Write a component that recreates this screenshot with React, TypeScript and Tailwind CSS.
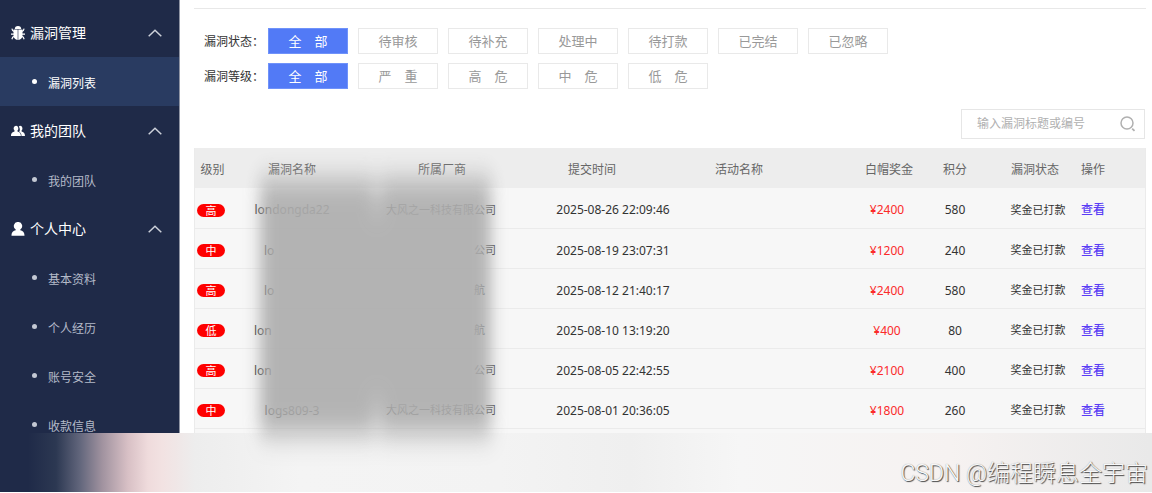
import React from "react";

type MenuGroup = { title: string; icon: React.ReactNode; items: string[] };

const BugIcon = () => (
  <svg viewBox="0 0 14 14" className="size-[14px]" aria-hidden="true">
    <path d="M3.800 3a3.200 3 0 0 1 6.400 0z" fill="#fff" />
    <path d="M2.500 3.600h4.200v10.400C4.200 13.800 2.500 12 2.500 9.500zM7.300 3.600h4.200v5.900c0 2.500-1.700 4.300-4.200 4.500z" fill="#fff" />
    <path d="M.9 2.600l.8 2 1.600.9M0 8.200h3M.9 13.300l.8-2.200 1.700-.8M13.100 2.600l-.8 2-1.600.9M14 8.200h-3M13.100 13.300l-.8-2.200-1.700-.8" stroke="#fff" strokeWidth="1.200" fill="none" />
  </svg>
);

const TeamIcon = () => (
  <svg viewBox="0 0 14 14" className="size-[14px]" aria-hidden="true">
    <path d="M9.300 1.800a2.400 2.600 0 0 1 1.300 4.600v1c1.500.5 3.400 1.300 3.400 4.500h-3.500c-.1-2.600-1-3.400-2.300-4 .9-1.500.9-4.100-.4-5.200.4-.6 1-.9 1.500-.9z" fill="#fff" />
    <path d="M5.200 1.800a2.400 2.600 0 0 1 1.300 4.600v1c1.600.5 3.400 1.300 3.400 4.500H0c0-3.200 1.900-4 3.500-4.500v-1a2.500 2.600 0 0 1 1.700-4.600z" fill="#fff" />
  </svg>
);

const UserIcon = () => (
  <svg viewBox="0 0 14 14" className="size-[14px]" aria-hidden="true">
    <path d="M7 0a3.900 4 0 0 1 2.300 7.400v.8c2.200.5 4.200 1.600 4.200 5.500H.5c0-3.900 2-5 4.200-5.500v-.8A3.900 4 0 0 1 7 0z" fill="#fff" />
  </svg>
);

const Chevron = () => (
  <svg viewBox="0 0 14 8" className="h-[8px] w-[14px]" aria-hidden="true">
    <path d="M.7 7.200L7 1.200l6.300 6" stroke="#cdd1da" strokeWidth="1.500" fill="none" />
  </svg>
);

const menu: MenuGroup[] = [
  { title: "漏洞管理", icon: <BugIcon />, items: ["漏洞列表"] },
  { title: "我的团队", icon: <TeamIcon />, items: ["我的团队"] },
  { title: "个人中心", icon: <UserIcon />, items: ["基本资料", "个人经历", "账号安全", "收款信息"] },
];

const filters = [
  { label: "漏洞状态：", options: ["全　部", "待审核", "待补充", "处理中", "待打款", "已完结", "已忽略"] },
  { label: "漏洞等级：", options: ["全　部", "严　重", "高　危", "中　危", "低　危"] },
];

const rows = [
  { level: "高", name: "londongda22", vendor: "大风之一科技有限公司", time: "2025-08-26 22:09:46", bounty: "¥2400", points: 580 },
  { level: "中", name: "lo", vendor: "公司", time: "2025-08-19 23:07:31", bounty: "¥1200", points: 240 },
  { level: "高", name: "lo", vendor: "航", time: "2025-08-12 21:40:17", bounty: "¥2400", points: 580 },
  { level: "低", name: "lon", vendor: "航", time: "2025-08-10 13:19:20", bounty: "¥400", points: 80 },
  { level: "高", name: "lon", vendor: "公司", time: "2025-08-05 22:42:55", bounty: "¥2100", points: 400 },
  { level: "中", name: "logs809-3", vendor: "大风之一科技有限公司", time: "2025-08-01 20:36:05", bounty: "¥1800", points: 260 },
];

function Sidebar() {
  return (
    <nav className="w-[180px] shrink-0 border-r border-[#8f94a3] bg-[#1f2a48] pt-2">
      {menu.map((group, g) => (
        <section key={group.title}>
          <button type="button" className="flex h-[49px] w-full items-center gap-[5px] pr-[17px] pl-[11px] text-[14px] text-white">
            {group.icon}
            <span>{group.title}</span>
            <span className="ml-auto"><Chevron /></span>
          </button>
          <ul>
            {group.items.map((item) => (
              <li key={item}>
                <a
                  href="#"
                  className={`flex h-[49px] items-center gap-[11px] pl-8 text-[12px] ${g === 0 ? "bg-[#293b61] text-white" : "text-[#b4bac8]"}`}
                >
                  <span className={`size-[5px] rounded-full ${g === 0 ? "bg-white" : "bg-[#c3c8d3]"}`} />
                  <span className="pt-1">{item}</span>
                </a>
              </li>
            ))}
          </ul>
        </section>
      ))}
    </nav>
  );
}

function Filters() {
  return (
    <div className="flex flex-col gap-[9px] pt-[19px] pl-[10px]">
      {filters.map((f) => (
        <div key={f.label} className="flex items-center" role="group" aria-label={f.label}>
          <span className="w-16 shrink-0 pt-[2px] text-[12px] whitespace-nowrap text-[#333]">{f.label}</span>
          <div className="flex gap-[10px]">
            {f.options.map((o, i) => (
              <button
                key={o}
                type="button"
                className={`h-[26px] w-20 border text-[13px] leading-none ${i === 0 ? "border-[#6f92fa] bg-[#527af6] text-white" : "border-[#e9e9e9] bg-white text-[#999]"}`}
              >
                {o}
              </button>
            ))}
          </div>
        </div>
      ))}
    </div>
  );
}

function SearchBox() {
  return (
    <form className="mt-5 mr-px ml-auto flex h-[30px] w-[184px] items-center border border-[#e6e6e6] pr-2 pl-[15px]" role="search">
      <input
        type="search"
        aria-label="搜索漏洞"
        placeholder="输入漏洞标题或编号"
        className="min-w-0 flex-1 bg-transparent text-[12px] text-[#333] outline-none placeholder:text-[#b0b0b0]"
      />
      <button type="button" aria-label="搜索">
        <svg viewBox="0 0 16 16" className="size-4" aria-hidden="true">
          <circle cx="7" cy="7" r="6" stroke="#b0b0b0" strokeWidth="1.500" fill="none" />
          <path d="M12.200 12.600l2.300 2.200" stroke="#b0b0b0" strokeWidth="1.800" />
        </svg>
      </button>
    </form>
  );
}

function Redaction() {
  return (
    <svg className="pointer-events-none absolute top-[-40px] left-0 z-10 h-[400px] w-[400px]" viewBox="0 0 400 400" aria-hidden="true">
      <defs>
        <filter id="soft" x="-50%" y="-50%" width="200%" height="200%">
          <feGaussianBlur stdDeviation="8 14" />
        </filter>
      </defs>
      <g filter="url(#soft)" fill="#aeaeae" opacity="0.93">
        <rect x="65" y="71" width="115" height="256" />
        <rect x="184" y="71" width="112" height="256" />
        <rect x="179" y="100" width="6" height="196" />
      </g>
    </svg>
  );
}

function BugTable() {
  return (
    <div className="relative mt-[9px] flex-1 border-x border-[#ebebeb] bg-[#f7f7f7]">
      <table className="w-full table-fixed border-collapse text-center text-[12px] whitespace-nowrap">
        <colgroup>
          <col className="w-[35px]" />
          <col className="w-[124px]" />
          <col className="w-[176px]" />
          <col className="w-[166px]" />
          <col />
          <col className="w-[64px]" />
          <col className="w-[68px]" />
          <col className="w-[92px]" />
          <col className="w-[64px]" />
        </colgroup>
        <thead>
          <tr className="h-[40px] bg-[#ededed] text-[#666] [&>th]:pt-[3px] [&>th]:font-normal">
            <th>级别</th>
            <th>漏洞名称</th>
            <th>所属厂商</th>
            <th className="pr-[42px]">提交时间</th>
            <th className="pl-[19px] text-left">活动名称</th>
            <th>白帽奖金</th>
            <th>积分</th>
            <th>漏洞状态</th>
            <th className="text-left">操作</th>
          </tr>
        </thead>
        <tbody>
          {rows.map((r) => (
            <tr key={r.time} className="h-[40px] border-b border-[#ebebeb] text-[#333] [&>td]:pt-[5px]">
              <td className="pl-[2px] text-left">
                <span className="flex h-[13px] w-7 items-center justify-center rounded-full bg-[#fe0000] text-[11px] leading-none text-white">{r.level}</span>
              </td>
              <td className={r.name.length > 4 ? "" : r.name === "lo" ? "pl-[34px] text-left" : "pl-[24px] text-left"}>{r.name}</td>
              <td className={`text-right text-[11px] ${r.vendor === "航" ? "pr-[45px]" : "pr-[34px]"}`}>{r.vendor}</td>
              <td>{r.time}</td>
              <td></td>
              <td className="pr-[4px] text-[#fb2a2a]">{r.bounty}</td>
              <td>{r.points}</td>
              <td className="pl-[6px] text-[11px]">奖金已打款</td>
              <td className="text-left">
                <a href="#" className="font-medium text-[#5a3cf5]">查看</a>
              </td>
            </tr>
          ))}
        </tbody>
      </table>
      <Redaction />
    </div>
  );
}

export default function App() {
  return (
    <div className="bg-white font-['Noto_Sans','Noto_Sans_CJK_SC',sans-serif]">
      <div className="flex">
        <Sidebar />
        <main className="flex min-w-0 flex-1 flex-col pt-2 pr-[6px] pl-[14px]">
          <hr className="border-[#e8e8e8]" />
          <Filters />
          <SearchBox />
          <BugTable />
        </main>
      </div>
      <footer className="relative -mt-4 flex h-[59px] items-end justify-end bg-[linear-gradient(90deg,#1f2a48_0,#1f2a48_28px,#2c3852_56px,#62667c_80px,#a0929f_102px,#d8c0c5_128px,#efdbdc_148px,#f2e2e2_162px,#ededed_195px,#f4f4f4_300px,#f3f3f3_500px,#efefef_630px,#f6f6f6_740px,#f6f2f1_950px,#e9e9e9_1150px)] pr-1">
        <p className="font-['Roboto','Noto_Sans_CJK_SC',sans-serif] text-[23px] leading-[36px] font-light whitespace-nowrap text-[#f8f8f8] [text-shadow:1px_1px_1px_#444,0_0_1px_#999]">CSDN @编程瞬息全宇宙</p>
      </footer>
    </div>
  );
}
